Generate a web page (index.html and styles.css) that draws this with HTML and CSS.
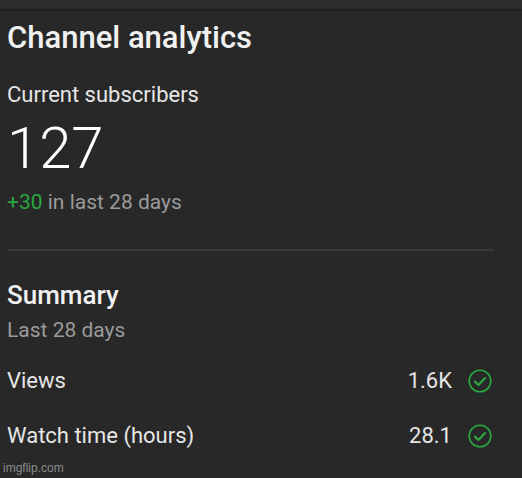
FILE: index.html
```html
<!DOCTYPE html>
<html>
<head>
<meta charset="utf-8">
<link rel="stylesheet" href="styles.css">
</head>
<body>
<div class="topbar"></div>
<main class="card">
  <h1 class="title">Channel analytics</h1>
  <div class="label">Current subscribers</div>
  <div class="big">127</div>
  <div class="delta"><span class="green">+30</span> in last 28 days</div>
  <hr class="divider">
  <h2 class="subtitle">Summary</h2>
  <div class="muted">Last 28 days</div>
  <div class="rows">
    <div class="row">
      <span class="rlabel">Views</span>
      <span class="rval">1.6K</span>
      <svg class="check" width="24" height="24" viewBox="0 0 24 24"><circle cx="12" cy="12" r="10.8" fill="none" stroke="#2ba640" stroke-width="1.6"/><path d="M7 12.6l3.4 3.4 6.6-7" fill="none" stroke="#2ba640" stroke-width="2.2" stroke-linecap="round" stroke-linejoin="round"/></svg>
    </div>
    <div class="row">
      <span class="rlabel">Watch time (hours)</span>
      <span class="rval">28.1</span>
      <svg class="check" width="24" height="24" viewBox="0 0 24 24"><circle cx="12" cy="12" r="10.8" fill="none" stroke="#2ba640" stroke-width="1.6"/><path d="M7 12.6l3.4 3.4 6.6-7" fill="none" stroke="#2ba640" stroke-width="2.2" stroke-linecap="round" stroke-linejoin="round"/></svg>
    </div>
  </div>
</main>
<div class="watermark">imgflip.com</div>
</body>
</html>
```
FILE: styles.css
```css
html, body {
  margin: 0;
  padding: 0;
  background: #282828;
  height: 100%;
  overflow: hidden;
}
body {
  font-family: Roboto, "Liberation Sans", sans-serif;
  color: #f1f1f1;
  position: relative;
}
.topbar {
  height: 9px;
  background: #2c2c2c;
  box-shadow: 0 1px 3px rgba(0,0,0,0.35);
}
.card {
  padding: 0 30px 0 7px;
}
.title {
  margin: 12px 0 0;
  font-size: 31px;
  font-weight: 500;
  line-height: 34px;
  color: #f1f1f1;
}
.label {
  margin-top: 27px;
  font-size: 22px;
  line-height: 26px;
  color: #e6e6e6;
}
.big {
  margin-top: 8px;
  font-size: 58px;
  font-weight: 300;
  line-height: 64px;
  color: #ffffff;
}
.delta {
  margin-top: 9px;
  font-size: 21px;
  line-height: 26px;
  color: #9a9a9a;
}
.green { color: #2ba640; }
.divider {
  border: 0;
  height: 2px;
  background: #383838;
  margin: 34px -2px 0 0;
}
.subtitle {
  margin: 29px 0 0;
  font-size: 26px;
  font-weight: 500;
  line-height: 30px;
  color: #f1f1f1;
}
.muted {
  margin-top: 7px;
  font-size: 21px;
  line-height: 26px;
  color: #9a9a9a;
}
.rows {
  margin-top: 10px;
  display: flex;
  flex-direction: column;
}
.row {
  display: flex;
  align-items: center;
  height: 55px;
  font-size: 22px;
  color: #e6e6e6;
}
.rlabel { flex: 1; }
.rval { margin-right: 16px; }
.check { display: block; }
.watermark {
  position: absolute;
  left: 3px;
  bottom: 3px;
  font-family: "Liberation Sans", Arial, sans-serif;
  font-size: 12px;
  color: #8a8a8a;
}
```
